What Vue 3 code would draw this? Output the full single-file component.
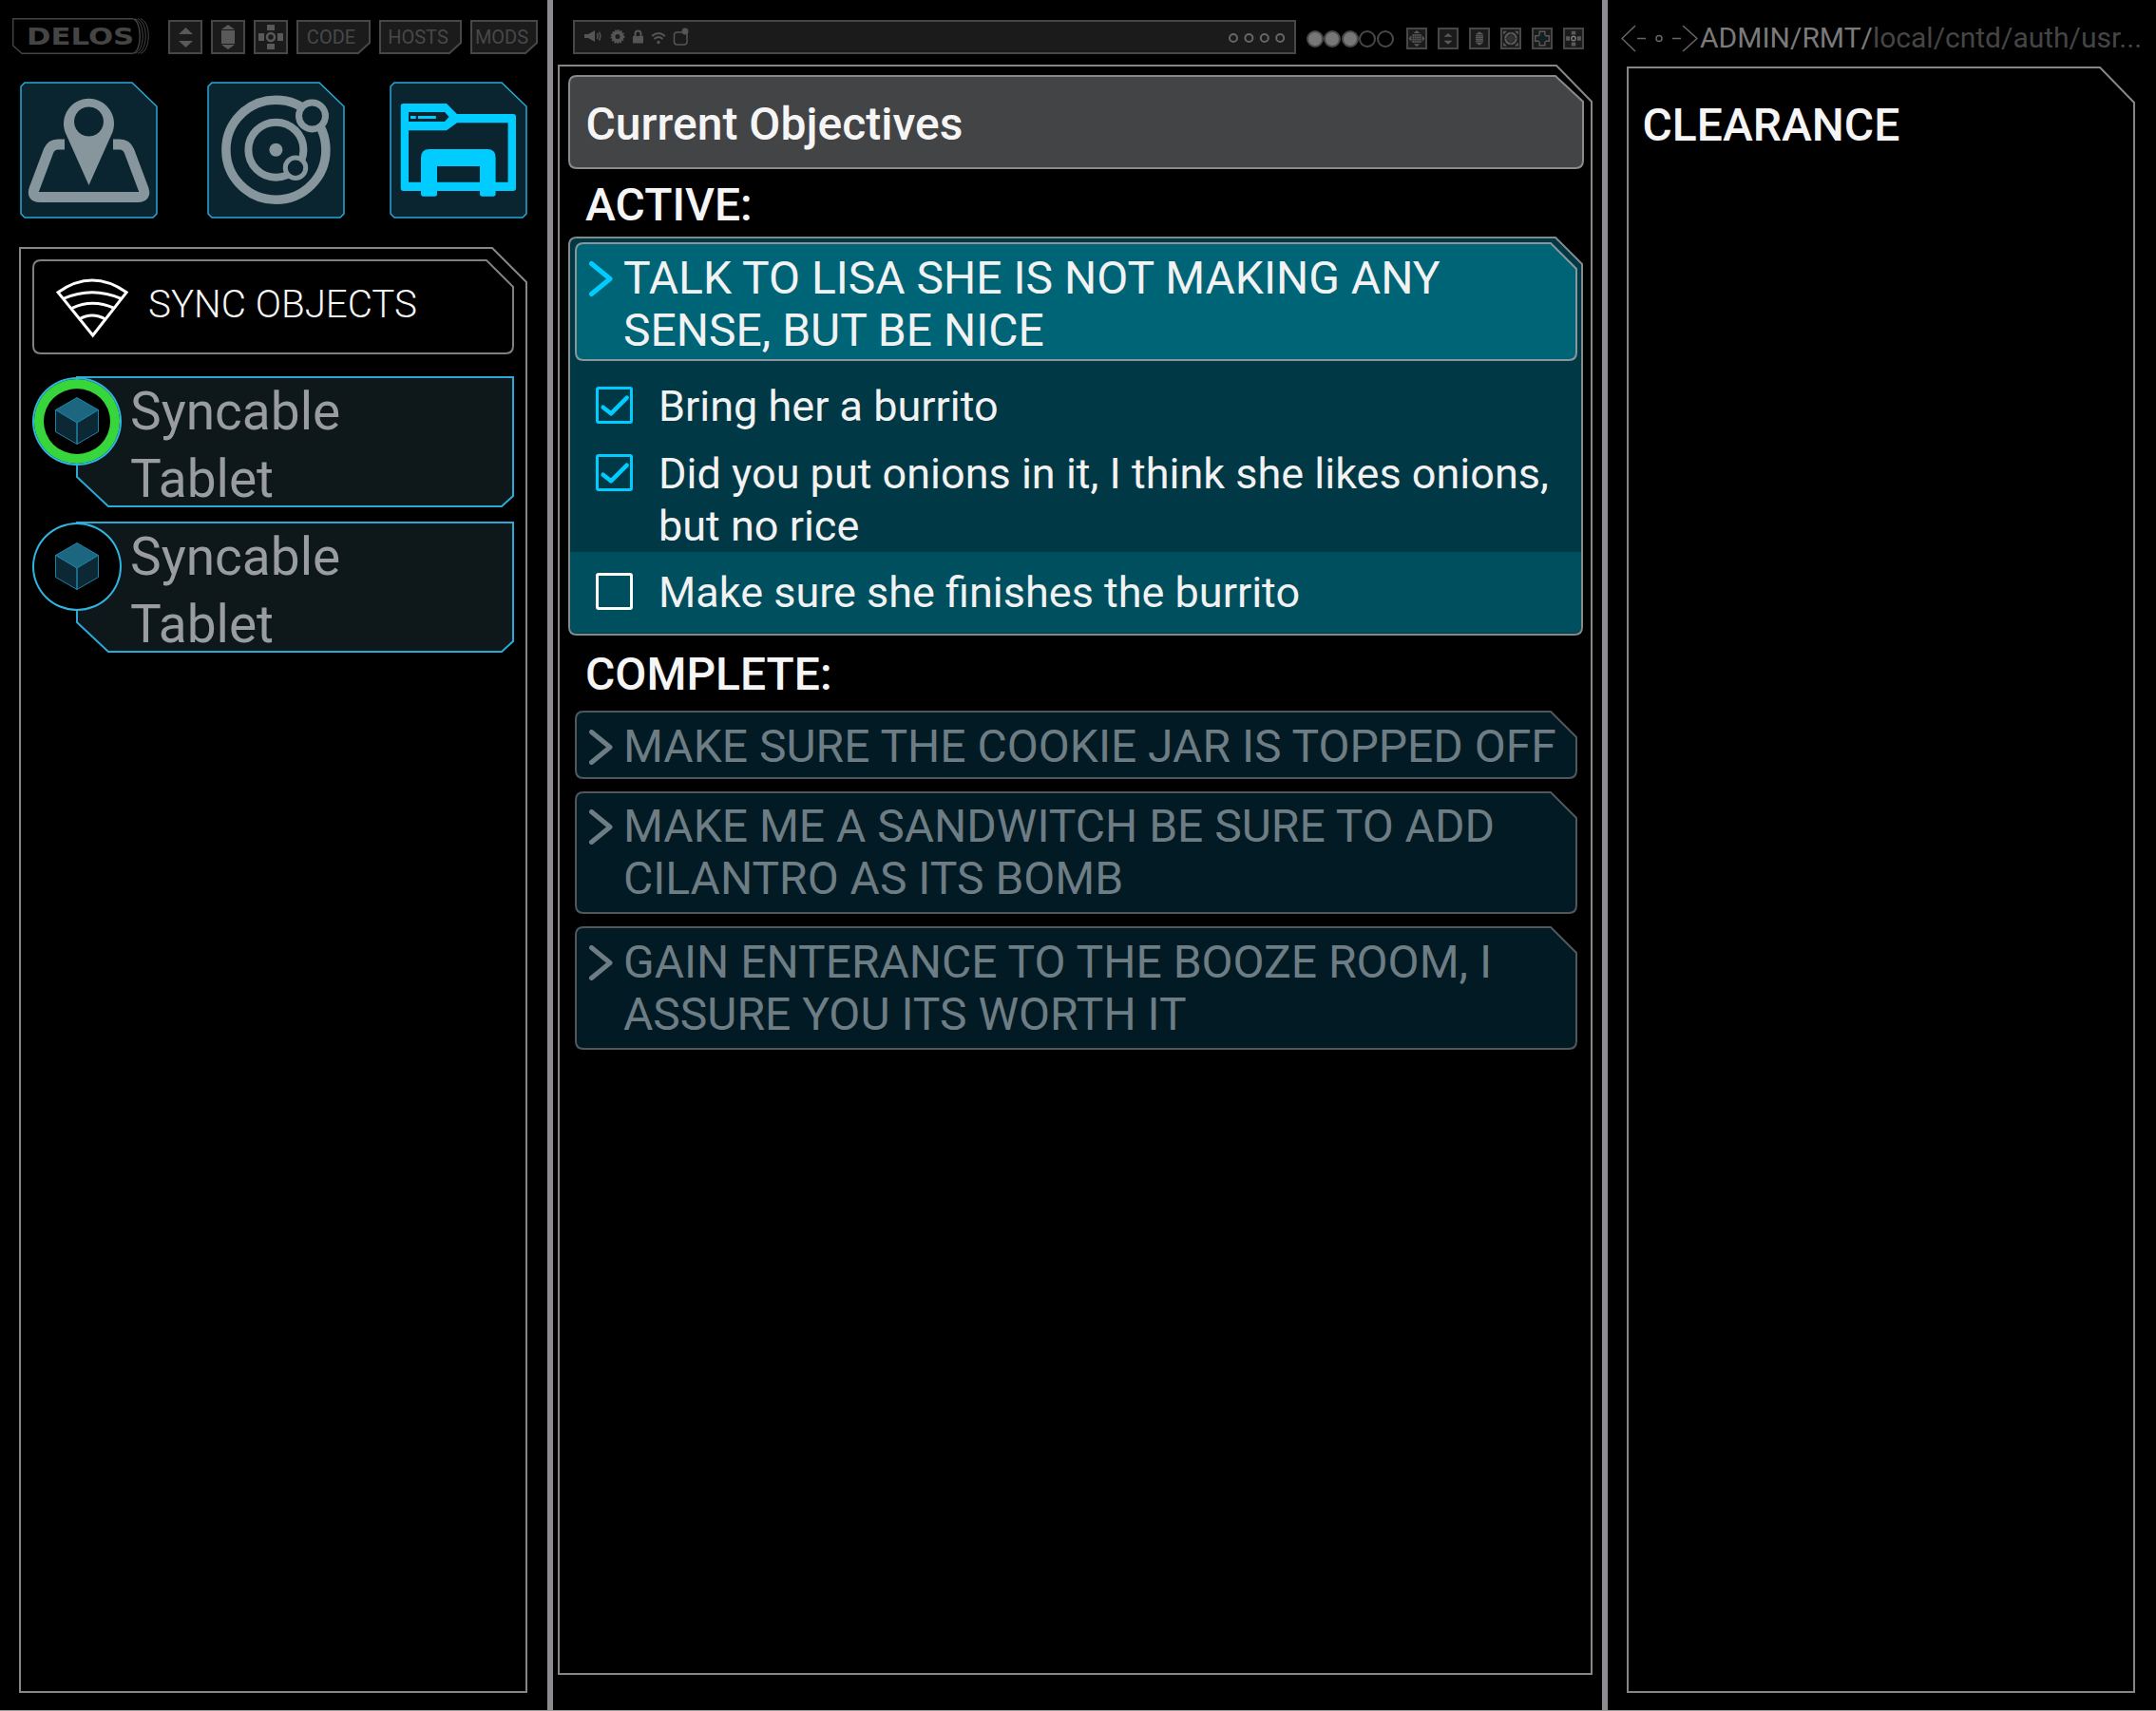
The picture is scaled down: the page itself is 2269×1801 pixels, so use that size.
<script setup>
const cut = (w, h, cx, cy, r = 0) =>
  `M${1 + r} 1 H${w - cx} L${w - 1} ${cy} V${h - 1 - r} Q${w - 1} ${h - 1} ${w - 1 - r} ${h - 1} H${1 + r} Q1 ${h - 1} 1 ${h - 1 - r} V${1 + r} Q1 1 ${1 + r} 1 Z`

const tags = [
  { label: 'CODE', w: 78 },
  { label: 'HOSTS', w: 87 },
  { label: 'MODS', w: 71 },
]
const tagPath = (w) => `M1 1 H${w - 1} V24 L${w - 13} 35 H1 Z`

const tilePath = 'M5 1 H118 L144 26 V139 L140 143 H5 L1 139 V5 Z'
const itemPath = 'M47 0 H506 V125 L494 136 H80 L47 105 Z'

const items = [{ id: 1, synced: true }, { id: 2, synced: false }]

const active = [
  { id: 1, text: 'Bring her a burrito', done: true, cls: 'first' },
  { id: 2, text: 'Did you put onions in it, I think she likes onions, but no rice', done: true, cls: 'second' },
  { id: 3, text: 'Make sure she finishes the burrito', done: false, cls: 'third' },
]

const complete = [
  { id: 1, text: 'MAKE SURE THE COOKIE JAR IS TOPPED OFF', h: 72 },
  { id: 2, text: 'MAKE ME A SANDWITCH BE SURE TO ADD CILANTRO AS ITS BOMB', h: 129 },
  { id: 3, text: 'GAIN ENTERANCE TO THE BOOZE ROOM, I ASSURE YOU ITS WORTH IT', h: 130 },
]

const discs = [
  { x: 9, on: true }, { x: 27, on: true }, { x: 46, on: true }, { x: 64, on: false }, { x: 83, on: false },
]
const rings = [1, 2, 3, 4]
const leftBtns = ['updown', 'stack', 'dpad']
const rightBtns = ['grid', 'updown', 'stack', 'globe', 'cross', 'dpad']
</script>

<template>
  <div class="app">
    <section class="col left">
      <div class="toolbar">
        <div class="logo">
          <svg class="shape" fill="none">
            <path class="logo-line" d="M0.7 0.7 H126 C137 1 137 37 126 37.3 H10 L0.7 29 Z" />
            <path class="logo-arc" d="M129 0.7 C140 4 140 34 129 37.3 M132 0.7 C143 4 143 34 132 37.3 M135 0.7 C146 4 146 34 135 37.3" />
          </svg>
          <span class="logo-text">DELOS</span>
        </div>
        <div v-for="b in leftBtns" :key="b" class="btn big">
          <svg viewBox="0 0 32 32" class="glyph">
            <template v-if="b === 'updown'">
              <path d="M9 13 L16.500 6 L24 13 Z M9 20 H24 L16.500 27 Z" />
            </template>
            <template v-else-if="b === 'stack'">
              <path d="M9 8 L16 3 L23 8 Z M9 24 H23 L16 29 Z" />
              <rect x="9" y="9" width="14" height="14" />
            </template>
            <template v-else>
              <path d="M12 3 H20 V9 H12 Z M12 23 H20 V29 H12 Z M3 12 H9 V20 H3 Z M23 12 H29 V20 H23 Z" />
              <circle cx="16" cy="16" r="4" class="ring" />
            </template>
          </svg>
        </div>
        <div v-for="t in tags" :key="t.label" class="tag" :style="{ width: t.w + 'px' }">
          <svg class="shape"><path :d="tagPath(t.w)" /></svg>
          <span>{{ t.label }}</span>
        </div>
      </div>

      <div class="tiles">
        <div class="tile">
          <svg class="shape"><path class="tile-edge" :d="tilePath" /></svg>
          <svg class="shape tile-art">
            <path class="art-fill" fill-rule="evenodd" d="M72.500 109 L47.500 53 A26.500 26.500 0 1 1 97.500 53 Z M72.500 26.500 A15.500 15.500 0 1 0 72.501 26.500 Z" />
            <path class="art-line" d="M47 66 H40 Q33 66 30 73 L15 113 Q12 121.500 21 121.500 H124 Q133 121.500 130 113 L115 73 Q112 66 105 66 H98" />
          </svg>
        </div>
        <div class="tile">
          <svg class="shape"><path class="tile-edge" :d="tilePath" /></svg>
          <svg class="shape tile-art">
            <circle class="art-ring outer" cx="72.400" cy="71.700" r="52.500" />
            <circle class="art-ring inner" cx="72.400" cy="71.700" r="29" />
            <circle class="art-fill" cx="72.400" cy="71.700" r="7" />
            <circle class="art-planet p1" cx="110.500" cy="36" r="14" />
            <circle class="art-planet p2" cx="93" cy="90.700" r="10.700" />
          </svg>
        </div>
        <div class="tile">
          <svg class="shape"><path class="tile-edge" :d="tilePath" /></svg>
          <svg class="shape tile-art">
            <path class="cyan" fill-rule="evenodd" d="M14.500 23 H60 L71 34 H130 Q133 34 133 37 V112 Q133 115 130 115 H14.500 Q11.700 115 11.700 112 V26 Q11.700 23 14.500 23 Z M20 32 V42 H58 L62.500 37 L58 32 Z M20 51.300 V105.700 H124.600 V43.300 H71 L60 51.300 Z" />
            <path class="cyan" d="M22 36 H27.700 V39 H22 Z M30 36 H48.800 V39 H30 Z" />
            <path class="cyan" d="M33 118 V80 Q33 71 42 71 H103 Q111.600 71 111.600 80 V118 Q111.600 120.700 109 120.700 H97.500 Q95 120.700 95 118 V89 H50 V118 Q50 120.700 47.500 120.700 H35.500 Q33 120.700 33 118 Z" />
          </svg>
        </div>
      </div>

      <div class="frame left-frame">
        <svg class="shape"><path class="frame-line" :d="cut(535, 1522, 37, 37)" /></svg>
        <div class="sync-head">
          <svg class="shape"><path class="head-line" :d="cut(507, 100, 29, 29, 8)" /></svg>
          <svg class="wifi" width="76" height="64" viewBox="-2 -2 76 64">
            <path d="M0 13.700 Q36 -11.700 72.200 13.700 L36.700 59 Z" />
            <path d="M5.600 20.300 Q36 7 66.600 20.300 M14.800 30.300 Q36 20.300 59.200 30.300 M22.200 42 Q36 34 50 42" />
          </svg>
          <span class="sync-title">SYNC OBJECTS</span>
        </div>
        <div v-for="item in items" :key="item.id" class="item">
          <svg class="shape"><path class="item-line" :d="itemPath" /></svg>
          <div class="badge" :class="{ synced: item.synced }">
            <svg class="cube" width="46" height="50" viewBox="0 0 46 50">
              <path class="cube-top" d="M23 0.500 L45.500 13.500 L23 27 L0.500 13.500 Z" />
              <path class="cube-side" d="M0.500 13.500 L23 27 V49.500 L0.500 36.500 Z M45.500 13.500 L23 27 V49.500 L45.500 36.500 Z" />
            </svg>
          </div>
          <div class="item-name">Syncable Tablet</div>
        </div>
      </div>
    </section>

    <div class="divider"></div>

    <section class="col middle">
      <div class="statusbar">
        <div class="address">
          <svg class="addr-icons" width="116" height="24">
            <path class="f" d="M1 8 H5 L12 4 V16 L5 12 H1 Z" />
            <path class="s" d="M14.500 7 Q16 10 14.500 13 M16.500 5.500 Q19 10 16.500 14.500" />
            <circle class="gear-teeth" cx="36" cy="10.500" r="6.500" />
            <circle class="s3" cx="36" cy="10.500" r="4" />
            <path class="s2" d="M54.500 10 V7.500 Q54.500 4.500 57.500 4.500 Q60.500 4.500 60.500 7.500 V10" />
            <rect class="f" x="52" y="10" width="11" height="7.500" />
            <path class="s2" d="M72 10 Q79 4 86 10 M74.500 13 Q79 9 83.500 13" />
            <circle class="f" cx="79" cy="16.500" r="1.700" />
            <rect class="s" x="95.500" y="6" width="13.500" height="13" rx="3" />
            <circle class="f" cx="107" cy="5" r="3.400" />
          </svg>
          <svg class="addr-rings" width="68" height="16">
            <circle v-for="(r, i) in rings" :key="r" cx="8" cy="8" r="4" :transform="`translate(${i * 16.400} 0)`" />
          </svg>
        </div>
        <svg class="discs" width="92" height="20">
          <circle v-for="d in discs" :key="d.x" :cx="d.x" cy="10" r="8" :class="{ on: d.on }" />
        </svg>
        <div class="mini-btns">
          <div v-for="(b, i) in rightBtns" :key="i" class="btn mini">
            <svg viewBox="0 0 32 32" class="glyph">
              <template v-if="b === 'updown'">
                <path d="M8 13 L16 6 L24 13 Z M8 20 H24 L16 27 Z" />
              </template>
              <template v-else-if="b === 'stack'">
                <path d="M9 8 L16 3 L23 8 Z M9 24 H23 L16 29 Z" />
                <rect x="9" y="9" width="14" height="14" />
                <path class="cut-lines" d="M9 12 H23 M9 16 H23 M9 20 H23" />
              </template>
              <template v-else-if="b === 'dpad'">
                <path d="M12 2 H20 V9 H12 Z M12 23 H20 V30 H12 Z M2 12 H9 V20 H2 Z M23 12 H30 V20 H23 Z" />
                <circle cx="16" cy="16" r="4" class="ring light" />
              </template>
              <template v-else-if="b === 'grid'">
                <path d="M16 1 L22 6 H10 Z M16 31 L10 26 H22 Z M1 16 L6 10 V22 Z M31 16 L26 22 V10 Z" />
                <rect x="8" y="8" width="16" height="16" />
                <path class="cut-lines" d="M8 12 H24 M8 16 H24 M8 20 H24 M12 8 V24 M16 8 V24 M20 8 V24" />
              </template>
              <template v-else-if="b === 'globe'">
                <path d="M2 2 L9 2 L2 9 Z M30 2 V9 L23 2 Z M2 30 V23 L9 30 Z M30 30 H23 L30 23 Z" />
                <circle cx="16" cy="16" r="12" />
                <circle class="dark-ring" cx="16" cy="16" r="7" />
                <path class="cut-lines" d="M4 16 H28 M16 4 V28" />
              </template>
              <template v-else>
                <path class="ring" d="M11 3 H21 V11 H29 V21 H21 V29 H11 V21 H3 V11 H11 Z" />
                <circle class="core" cx="16" cy="16" r="7" />
              </template>
            </svg>
          </div>
        </div>
      </div>

      <div class="frame middle-frame">
        <svg class="shape"><path class="frame-line" :d="cut(1089, 1695, 38, 39)" /></svg>
        <div class="title-bar">
          <svg class="shape"><path class="title-shape" :d="cut(1069, 99, 30, 28, 8)" /></svg>
          <h1>Current Objectives</h1>
        </div>
        <h2 class="section-label active-label">ACTIVE:</h2>
        <div class="panel">
          <svg class="shape"><path class="panel-shape" :d="cut(1068, 420, 29, 29, 8)" /></svg>
          <div class="objective current">
            <svg class="shape"><path class="current-shape" :d="cut(1055, 125, 28, 28, 8)" /></svg>
            <svg class="chev" width="26" height="37"><path d="M2.500 2.500 L22 18.500 L2.500 34.500" /></svg>
            <div class="objective-text">TALK TO LISA SHE IS NOT MAKING ANY SENSE, BUT BE NICE</div>
          </div>
          <div v-for="row in active" :key="row.id" class="task" :class="row.cls">
            <div class="box" :class="{ checked: row.done }">
              <svg v-if="row.done" class="tick" width="33" height="33"><path d="M4.700 18.700 L13 25.300 L29.700 8.700" /></svg>
            </div>
            <div class="task-text">{{ row.text }}</div>
          </div>
        </div>
        <h2 class="section-label complete-label">COMPLETE:</h2>
        <div class="done-list">
          <div v-for="c in complete" :key="c.id" class="objective done" :style="{ height: c.h + 'px' }">
            <svg class="shape"><path class="done-shape" :d="cut(1055, c.h, 28, 28, 8)" /></svg>
            <svg class="chev" width="26" height="37"><path d="M2.500 2.500 L22 18.500 L2.500 34.500" /></svg>
            <div class="objective-text">{{ c.text }}</div>
          </div>
        </div>
      </div>
    </section>

    <div class="divider"></div>

    <section class="col right">
      <div class="pathbar">
        <svg class="nav" width="81" height="36">
          <path d="M15 6 L1 19.500 L15 33 M17 19.500 H26 M54 19.500 H63 M65 6 L80 19.500 L65 33" />
          <circle cx="40" cy="19.500" r="3" />
        </svg>
        <span class="crumb"><span class="crumb-strong">ADMIN/RMT/</span>local/cntd/auth/usr...</span>
      </div>
      <div class="frame right-frame">
        <svg class="shape"><path class="frame-line" :d="cut(535, 1712, 37, 38)" /></svg>
        <h2 class="clearance">CLEARANCE</h2>
      </div>
    </section>
  </div>
</template>

<style>
html, body {
  margin: 0;
  background: #000;
}
</style>

<style scoped>
.app {
  display: flex;
  width: 2269px;
  height: 1800px;
  border-bottom: 1px solid #9a9a9a;
  background: #000;
  font-family: Roboto, "Liberation Sans", sans-serif;
  overflow: hidden;
}
.col { flex: none; }
.left { width: 576px; }
.middle { width: 1104px; }
.right { width: 577px; }
.divider {
  flex: none;
  width: 6px;
  background: #8b8b90;
}
.shape {
  position: absolute;
  inset: 0;
  width: 100%;
  height: 100%;
  overflow: visible;
}
.frame { position: relative; box-sizing: border-box; }
.frame-line { fill: none; stroke: #868686; stroke-width: 2; }

/* left toolbar */
.toolbar {
  display: flex;
  align-items: flex-start;
  gap: 9px;
  height: 38px;
  padding: 19px 0 0 13px;
}
.logo {
  position: relative;
  width: 146px;
  height: 38px;
  margin-right: 9px;
  display: flex;
  align-items: center;
  justify-content: flex-start;
}
.logo-line { stroke: #444; stroke-width: 1.400; }
.logo-arc { stroke: #444; stroke-width: 1; }
.logo-text {
  position: relative;
  margin: 2px 0 0 15px;
  font-family: "DejaVu Sans", sans-serif;
  font-weight: 700;
  font-size: 24px;
  color: #454545;
  transform: scaleX(1.28);
  transform-origin: left center;
}
.btn {
  flex: none;
  box-sizing: border-box;
  border: 2px solid #474747;
  background: #1b1b1b;
}
.btn.big { width: 36px; height: 36px; margin-top: 2px; }
.btn.mini { width: 22px; height: 23px; }
.glyph { display: block; width: 100%; height: 100%; fill: #595959; }
.glyph .ring { fill: none; stroke: #595959; stroke-width: 2.500; }
.glyph .ring.light { stroke: #777; fill: #222; }
.glyph .cut-lines { fill: none; stroke: #333; stroke-width: 1.500; }
.glyph .dark-ring { fill: #333; stroke: #222; stroke-width: 2; }
.glyph .core { fill: #0f2228; }
.tag {
  position: relative;
  flex: none;
  box-sizing: border-box;
  height: 36px;
  margin-top: 2px;
  padding-right: 5px;
  display: flex;
  align-items: center;
  justify-content: center;
  fill: #1b1b1b;
  stroke: #474747;
  stroke-width: 2;
}
.tag span {
  position: relative;
  font-size: 20px;
  color: #484848;
  stroke: none;
}

/* tiles */
.tiles {
  display: flex;
  padding: 29px 0 0 21px;
}
.tile {
  position: relative;
  flex: none;
  width: 145px;
  height: 144px;
}
.tile:nth-child(2) { margin-left: 51.500px; }
.tile:nth-child(3) { margin-left: 47px; }
.tile-edge { fill: #0b2530; stroke: #2aa9d6; stroke-width: 1.500; }
.art-fill { fill: #87959c; }
.art-line { fill: none; stroke: #87959c; stroke-width: 11; }
.art-ring { fill: none; stroke: #87959c; }
.art-ring.outer { stroke-width: 9.500; }
.art-ring.inner { stroke-width: 8; }
.art-planet { fill: #0b2530; stroke: #87959c; }
.art-planet.p1 { stroke-width: 7; }
.art-planet.p2 { stroke-width: 5; }
.cyan { fill: #00ccff; }

/* sync panel */
.left-frame {
  width: 535px;
  height: 1522px;
  margin: 30px 0 0 20px;
  padding: 13px 0 0 14px;
}
.sync-head {
  position: relative;
  width: 507px;
  height: 100px;
  display: flex;
  align-items: center;
  padding-left: 25px;
  box-sizing: border-box;
}
.head-line { fill: none; stroke: #808080; stroke-width: 2; }
.wifi {
  position: relative;
  fill: none;
  stroke: #fff;
  stroke-width: 3;
  stroke-linejoin: miter;
  margin-top: 2px;
}
.sync-title {
  position: relative;
  margin-left: 21px;
  font-size: 40.300px;
  font-weight: 300;
  color: #f5f5f5;
  margin-top: -6px;
}
.item {
  position: relative;
  display: flex;
  width: 507px;
  height: 136px;
  margin-top: 17px;
}
.sync-head + .item { margin-top: 24px; }
.item-line { fill: #0e171a; stroke: #2aa9d6; stroke-width: 2; }
.badge {
  position: relative;
  flex: none;
  box-sizing: border-box;
  width: 94px;
  height: 93px;
  border-radius: 50%;
  border: 2px solid #2fb4e0;
  background: #000;
  display: flex;
  align-items: center;
  justify-content: center;
}
.badge.synced {
  box-shadow: inset 0 0 0 10px #37d63a;
}
.cube { position: relative; top: -1px; }
.cube-top { fill: #1c6680; stroke: #1d83a6; stroke-width: 1; }
.cube-side { fill: #0c2834; stroke: #1d83a6; stroke-width: 1; }
.item-name {
  position: relative;
  width: 300px;
  margin-left: 9px;
  padding-top: 1px;
  font-size: 55px;
  font-weight: 400;
  line-height: 71px;
  color: #999ca0;
}

/* middle */
.statusbar {
  display: flex;
  align-items: center;
  height: 36px;
  padding: 21px 0 0 20.500px;
}
.address {
  box-sizing: border-box;
  display: flex;
  align-items: center;
  justify-content: space-between;
  width: 761px;
  height: 36px;
  padding: 2px 4px 0 9px;
  border: 2px solid #474747;
  background: #1b1b1b;
}
.addr-icons { fill: none; }
.addr-icons .f { fill: #555; }
.addr-icons .s { fill: none; stroke: #555; stroke-width: 1.500; }
.addr-icons .s2 { fill: none; stroke: #555; stroke-width: 2; }
.addr-icons .s3 { fill: #1b1b1b; stroke: #555; stroke-width: 3; }
.addr-icons .gear-teeth { fill: #555; stroke: #555; stroke-width: 2; stroke-dasharray: 1.500 1.500; }
.addr-rings { fill: none; stroke: #666; stroke-width: 2; overflow: visible; }
.discs {
  flex: none;
  margin: 4px 0 0 11px;
  fill: none;
  stroke: #484848;
  stroke-width: 2;
}
.discs .on { fill: #777; }
.mini-btns {
  display: flex;
  gap: 11.200px;
  margin: 3px 0 0 13px;
}
.middle-frame {
  width: 1089px;
  height: 1695px;
  margin: 11px 0 0 5px;
  padding: 11px 0 0 11px;
}
.title-bar {
  position: relative;
  width: 1069px;
  height: 99px;
}
.title-shape { fill: #434446; stroke: #8a8a8a; stroke-width: 2; }
h1, h2 { margin: 0; font-weight: 500; color: #f5f5f5; }
h1 {
  position: relative;
  padding: 4px 0 0 18.500px;
  font-size: 48px;
  line-height: 95px;
}
.section-label {
  position: relative;
  padding-left: 18px;
  font-size: 48px;
  box-sizing: border-box;
}
.active-label { height: 71px; line-height: 75px; }
.complete-label { height: 79px; line-height: 81px; }
.panel {
  position: relative;
  box-sizing: border-box;
  width: 1068px;
  height: 420px;
  padding: 6px 2px 0 2px;
  margin-left: 0;
}
.panel-shape { fill: #003845; stroke: #828a8c; stroke-width: 2; }
.objective {
  position: relative;
  box-sizing: border-box;
  display: flex;
  gap: 10px;
  width: 1055px;
  padding: 10px 0 0 15px;
  font-size: 48px;
  line-height: 55px;
}
.objective.current {
  height: 125px;
  margin-left: 5px;
  color: #f2f2f2;
}
.current-shape { fill: #006477; stroke: #8a9699; stroke-width: 2; }
.chev {
  position: relative;
  flex: none;
  margin-top: 10px;
  fill: none;
  stroke-width: 5;
  stroke-linecap: round;
  stroke-linejoin: round;
}
.current .chev { stroke: #00ccff; }
.done .chev { stroke: #6d7d83; }
.objective-text {
  position: relative;
  width: 985px;
}
.task {
  position: relative;
  box-sizing: border-box;
  display: flex;
  gap: 27px;
  padding-left: 27px;
  font-size: 45px;
  line-height: 55px;
  color: #f2f2f2;
}
.task.first { padding-top: 20px; }
.task.second { padding-top: 16px; }
.task.third {
  height: 85px;
  padding-top: 15px;
  background: #004f5f;
  border-radius: 0 0 7px 7px;
}
.box {
  flex: none;
  box-sizing: border-box;
  width: 39px;
  height: 39px;
  margin-top: 7px;
  border: 3px solid #fff;
  border-radius: 3px;
}
.box.checked { border-color: #00ccff; }
.tick {
  display: block;
  fill: none;
  stroke: #00ccff;
  stroke-width: 4.500;
  stroke-linecap: round;
  stroke-linejoin: round;
}
.task-text { width: 970px; }
.done-list {
  display: flex;
  flex-direction: column;
  gap: 13px;
  padding-left: 7px;
}
.done { color: #6d7d83; }
.done:nth-child(2) { padding-top: 9px; }
.done-shape { fill: #021a24; stroke: #51585b; stroke-width: 2; }

/* right */
.pathbar {
  display: flex;
  align-items: flex-start;
  height: 36px;
  padding: 21px 0 0 14px;
}
.nav {
  flex: none;
  fill: none;
  stroke: #666;
  stroke-width: 1.500;
}
.crumb {
  margin-left: 2px;
  font-size: 30px;
  line-height: 36px;
  padding-top: 1px;
  color: #454545;
  white-space: nowrap;
}
.crumb-strong { color: #7a7a7a; }
.right-frame {
  width: 535px;
  height: 1712px;
  margin: 13px 0 0 20px;
  padding: 0 0 0 16.500px;
}
.clearance {
  position: relative;
  margin-top: 0;
  padding-top: 35px;
  font-size: 48px;
  font-weight: 500;
  line-height: 54px;
}
</style>
